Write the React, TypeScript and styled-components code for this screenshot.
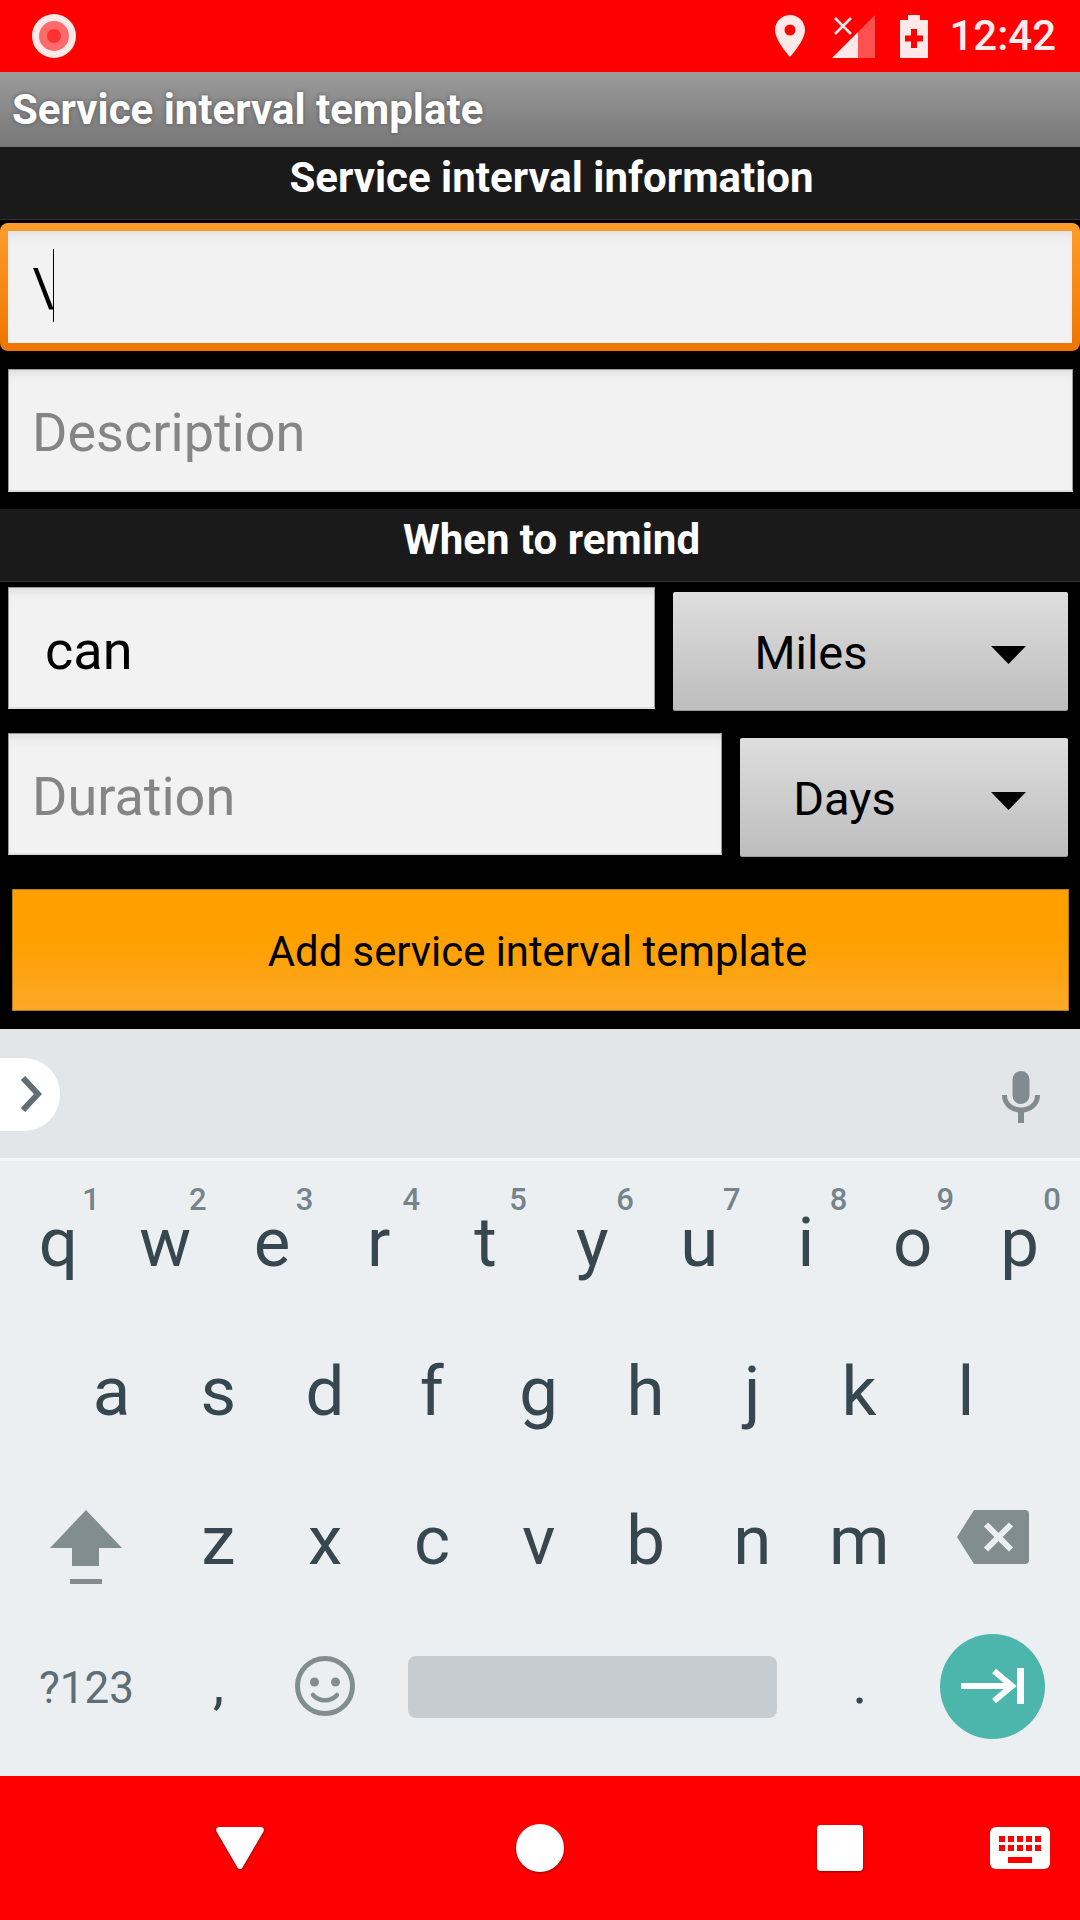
import React from "react";
import styled, { createGlobalStyle } from "styled-components";

const Global = createGlobalStyle`
  html, body { margin: 0; padding: 0; background: #000; }
  #root { width: 1080px; height: 1920px; overflow: hidden; }
  * { box-sizing: border-box; }
`;

const Screen = styled.div`
  width: 1080px;
  height: 1920px;
  display: flex;
  flex-direction: column;
  background: #000;
  font-family: Roboto, "Liberation Sans", sans-serif;
`;

const StatusBar = styled.div`
  height: 72px;
  background: #f00;
  display: flex;
  align-items: center;
  padding: 0 24px 0 32px;
`;
const StatusGap = styled.div`flex: 1;`;
const Clock = styled.span`
  color: #ffecec;
  font-size: 42px;
  font-weight: 500;
  margin-left: 21px;
  line-height: 72px;
`;
const StatusIcon = styled.svg<{ $ml?: number }>`
  display: block;
  flex: none;
  margin-left: ${p => p.$ml ?? 0}px;
`;

const Form = styled.div`
  height: 957px;
  display: flex;
  flex-direction: column;
`;
const TitleBar = styled.div`
  height: 75px;
  background: linear-gradient(#9b9b9b, #777);
  color: #fff;
  font-size: 42px;
  font-weight: 700;
  line-height: 75px;
  padding-left: 12px;
  text-shadow: 0 0 4px #555;
`;
const SectionHeader = styled.div<{ $mt?: number }>`
  height: 73px;
  flex: none;
  margin-top: ${p => p.$mt ?? 0}px;
  background: #1a1a1a;
  border-bottom: 1px solid #333;
  color: #fff;
  font-size: 42px;
  font-weight: 700;
  text-align: center;
  line-height: 62px;
  padding-left: 23px;
`;
const FocusField = styled.div`
  margin-top: 3px;
  height: 128px;
  flex: none;
  padding: 8px;
  border-radius: 8px;
  background: linear-gradient(#ff9d2b, #ee7500);
`;
const FieldFill = styled.div`
  height: 100%;
  background: #f2f2f2;
  box-shadow: inset 0 10px 12px -8px #d8d8d8;
  padding-left: 24px;
  display: flex;
  align-items: center;
  font-size: 54px;
  color: #000;
`;
const Caret = styled.span`
  width: 1px;
  height: 73px;
  background: #000;
  margin: -3px 0 0 -1px;
`;
const Field = styled.div<{ $w?: number; $h?: number; $pl?: number; $mt?: number; $dim?: boolean }>`
  ${p => (p.$w ? `width: ${p.$w}px; flex: none;` : "margin: 0 7px 0 8px;")}
  margin-top: ${p => p.$mt ?? 0}px;
  height: ${p => p.$h ?? 122}px;
  flex: none;
  background: #f2f2f2;
  border: 1px solid #999;
  border-bottom: 2px solid #ddd;
  box-shadow: inset 0 10px 12px -8px #d8d8d8;
  padding: 5px 0 0 ${p => p.$pl ?? 23}px;
  display: flex;
  align-items: center;
  font-size: 54px;
  color: ${p => (p.$dim ? "#858585" : "#000")};
`;
const Row = styled.div<{ $mt: number }>`
  display: flex;
  align-items: flex-start;
  margin: ${p => p.$mt}px 12px 0 8px;
  gap: 18px;
  flex: none;
`;
const Select = styled.div<{ $w: number }>`
  width: ${p => p.$w}px;
  flex: none;
  height: 119px;
  margin-top: 5px;
  background: linear-gradient(#dedede, #bdbdbd);
  border-radius: 2px;
  border-bottom: 1px solid #999;
  display: flex;
  align-items: center;
  font-size: 47px;
  color: #000;
`;
const SelectLabel = styled.span`
  flex: 1;
  text-align: center;
  padding-top: 2px;
`;
const SelectArrow = styled.svg`
  display: block;
  margin: 8px 42px 0 42px;
`;
const AddButton = styled.div`
  margin: 32px 11px 0 12px;
  height: 122px;
  flex: none;
  background: linear-gradient(#ffa000 40%, #fca727);
  border: 1px solid #b57a1a;
  color: #000;
  font-size: 41.800px;
  display: flex;
  align-items: center;
  justify-content: center;
  padding: 2px 6px 0 0;
`;

const Keyboard = styled.div`
  height: 747px;
  background: #ebeff2;
  display: flex;
  flex-direction: column;
  color: #37474f;
`;
const SuggestStrip = styled.div`
  height: 132px;
  flex: none;
  background: #e2e6e9;
  border-bottom: 3px solid #f4f6f8;
  display: flex;
  align-items: center;
  justify-content: space-between;
  padding-right: 40px;
`;
const Pill = styled.div`
  width: 60px;
  height: 73px;
  background: #fff;
  border-radius: 0 36px 36px 0;
  display: flex;
  align-items: center;
  padding-left: 20px;
  margin-top: 1px;
`;
const MicIcon = styled.svg`
  display: block;
  margin-top: 6px;
`;
const KeyRows = styled.div`
  flex: 1;
  display: flex;
  flex-direction: column;
  padding-top: 13px;
`;
const KeyRow = styled.div<{ $pl: number; $pb?: number }>`
  height: 149px;
  flex: none;
  display: flex;
  justify-content: flex-start;
  align-items: center;
  padding-left: ${p => p.$pl}px;
  padding-bottom: ${p => p.$pb ?? 0}px;
`;
const Key = styled.div<{ $w?: number }>`
  position: relative;
  width: ${p => p.$w ?? 106.8}px;
  flex: none;
  height: 100%;
  display: flex;
  align-items: center;
  justify-content: center;
  font-size: 69px;
  line-height: 1;
  color: #37474f;
`;
const Letter = styled.span`
  margin-bottom: 12px;
`;
const Hint = styled.span`
  position: absolute;
  top: 10px;
  right: 12px;
  font-size: 31px;
  font-weight: 500;
  color: #75838a;
`;
const SymbolsLabel = styled.span`
  font-size: 44px;
  color: #5d6e76;
  padding-top: 4px;
`;
const Punctuation = styled.span`
  font-size: 56px;
  margin-bottom: 4px;
`;
const SpaceBar = styled.div`
  width: 369px;
  height: 62px;
  flex: none;
  background: #c7ccd0;
  border-radius: 8px;
  margin: 2px 30px 0 29px;
`;
const EnterCircle = styled.div`
  width: 105px;
  height: 105px;
  border-radius: 50%;
  background: #4db6ac;
  display: flex;
  align-items: center;
  justify-content: center;
`;
const ShiftIcon = styled.svg`
  display: block;
  margin-right: 2px;
`;
const DeleteIcon = styled.svg`
  display: block;
  margin-bottom: 20px;
`;

const NavBar = styled.div`
  height: 144px;
  flex: none;
  background: #f00;
  display: flex;
  align-items: center;
  padding-left: 216px;
`;
const NavIcon = styled.svg<{ $ml?: number; $shadow?: boolean }>`
  display: block;
  flex: none;
  overflow: visible;
  margin-left: ${p => p.$ml ?? 0}px;
  ${p => (p.$shadow ? "filter: drop-shadow(0 1px 1px rgba(0,0,0,.45));" : "")}
`;

const row1: [string, string][] = [["q","1"],["w","2"],["e","3"],["r","4"],["t","5"],["y","6"],["u","7"],["i","8"],["o","9"],["p","0"]];

export default function App() {
  return (
    <Screen>
      <Global />
      <StatusBar>
        <StatusIcon width="44" height="44" viewBox="0 0 44 44">
          <circle cx="22" cy="22" r="22" fill="#ffe8e8" />
          <circle cx="22" cy="22" r="15" fill="#ff6a6a" />
          <circle cx="22" cy="22" r="7" fill="#ff3030" />
        </StatusIcon>
        <StatusGap />
        <StatusIcon width="30" height="42" viewBox="0 0 30 42">
          <path fillRule="evenodd" fill="#ffe8e8" d="M15 0C6.700 0 0 6.700 0 15c0 10.500 15 27 15 27s15-16.500 15-27C30 6.700 23.300 0 15 0zm0 9.500a5.500 5.500 0 1 1 0 11 5.500 5.500 0 0 1 0-11z" />
        </StatusIcon>
        <StatusIcon $ml={27} width="43" height="43" viewBox="0 0 43 43">
          <path fill="#ff5050" d="M43 0v43H26V17z" />
          <path fill="#ffe8e8" d="M26 17v26H0z" />
          <path stroke="#ffe8e8" strokeWidth="2.500" fill="none" d="M3 3l16 16M19 3L3 19" />
        </StatusIcon>
        <StatusIcon $ml={25} width="28" height="43" viewBox="0 0 28 43">
          <path fill="#ffe8e8" d="M8 0h12v5h8v38H0V5h8z" />
          <path fill="#f00" d="M11 14h6v6.500h6v6h-6V33h-6v-6.500H5v-6h6z" />
        </StatusIcon>
        <Clock>12:42</Clock>
      </StatusBar>
      <Form>
        <TitleBar>Service interval template</TitleBar>
        <SectionHeader>Service interval information</SectionHeader>
        <FocusField>
          <FieldFill>\<Caret /></FieldFill>
        </FocusField>
        <Field $mt={18} $h={123} $dim>Description</Field>
        <SectionHeader $mt={17}>When to remind</SectionHeader>
        <Row $mt={5}>
          <Field $w={647} $pl={36}>can</Field>
          <Select $w={395}>
            <SelectLabel>Miles</SelectLabel>
            <SelectArrow width="35" height="18" viewBox="0 0 35 18"><path d="M0 0h35L17.500 18z" fill="#000" /></SelectArrow>
          </Select>
        </Row>
        <Row $mt={22}>
          <Field $w={714} $dim>Duration</Field>
          <Select $w={328}>
            <SelectLabel>Days</SelectLabel>
            <SelectArrow width="35" height="18" viewBox="0 0 35 18"><path d="M0 0h35L17.500 18z" fill="#000" /></SelectArrow>
          </Select>
        </Row>
        <AddButton>Add service interval template</AddButton>
      </Form>
      <Keyboard>
        <SuggestStrip>
          <Pill>
            <svg width="22" height="36" viewBox="0 0 22 36"><path d="M3 2l15 16L3 34" fill="none" stroke="#5f6f75" strokeWidth="6" /></svg>
          </Pill>
          <MicIcon width="38" height="52" viewBox="0 0 38 52">
            <rect x="10.500" y="0" width="17" height="33" rx="8.500" fill="#808c8f" />
            <path d="M2.500 24c0 9 7 15 16.500 15s16.500-6 16.500-15" fill="none" stroke="#808c8f" strokeWidth="5" />
            <rect x="16" y="39" width="6" height="13" fill="#808c8f" />
          </MicIcon>
        </SuggestStrip>
        <KeyRows>
          <KeyRow $pl={5}>
            {row1.map(([k, n]) => (
              <Key key={k}><Letter>{k}</Letter><Hint>{n}</Hint></Key>
            ))}
          </KeyRow>
          <KeyRow $pl={58}>
            {"asdfghjkl".split("").map(k => <Key key={k}><Letter>{k}</Letter></Key>)}
          </KeyRow>
          <KeyRow $pl={8}>
            <Key $w={157}>
              <ShiftIcon width="72" height="74" viewBox="0 0 72 74">
                <path d="M36 0l36 38H49v18H22V38H0z" fill="#828d90" />
                <rect x="20" y="69" width="32" height="5" fill="#828d90" />
              </ShiftIcon>
            </Key>
            {"zxcvbnm".split("").map(k => <Key key={k}><Letter>{k}</Letter></Key>)}
            <Key $w={161}>
              <DeleteIcon width="72" height="54" viewBox="0 0 72 54">
                <path d="M17 0h51a4 4 0 0 1 4 4v46a4 4 0 0 1-4 4H17L0 27z" fill="#828d90" />
                <path d="M29 14.500l25 25M54 14.500l-25 25" stroke="#ebeff2" strokeWidth="6" />
              </DeleteIcon>
            </Key>
          </KeyRow>
          <KeyRow $pl={8} $pb={19}>
            <Key $w={157}><SymbolsLabel>?123</SymbolsLabel></Key>
            <Key><Punctuation>,</Punctuation></Key>
            <Key>
              <svg width="60" height="60" viewBox="0 0 60 60">
                <circle cx="30" cy="30" r="27.500" fill="none" stroke="#828d90" strokeWidth="5" />
                <circle cx="19.500" cy="26" r="4.500" fill="#828d90" />
                <circle cx="40.500" cy="26" r="4.500" fill="#828d90" />
                <path d="M18 39c6 7 18 7 24 0" fill="none" stroke="#828d90" strokeWidth="4.500" strokeLinecap="round" />
              </svg>
            </Key>
            <SpaceBar />
            <Key><Punctuation>.</Punctuation></Key>
            <Key $w={159}>
              <EnterCircle>
                <svg width="63" height="36" viewBox="0 0 63 36">
                  <path d="M0 18h50M33 3l18 15-18 15" fill="none" stroke="#fff" strokeWidth="6" />
                  <rect x="56" y="0" width="7" height="36" fill="#fff" />
                </svg>
              </EnterCircle>
            </Key>
          </KeyRow>
        </KeyRows>
      </Keyboard>
      <NavBar>
        <NavIcon $shadow width="48" height="42" viewBox="0 0 48 42">
          <path d="M3 0h42c2.500 0 3.500 2.500 2.500 4.500L26.500 40.500c-1 2-4 2-5 0L.5 4.500C-.5 2.500.5 0 3 0z" fill="#fff" />
        </NavIcon>
        <NavIcon $shadow $ml={252} width="48" height="48" viewBox="0 0 48 48"><circle cx="24" cy="24" r="24" fill="#fff" /></NavIcon>
        <NavIcon $shadow $ml={253} width="46" height="46" viewBox="0 0 46 46"><rect width="46" height="46" rx="4" fill="#fff" /></NavIcon>
        <NavIcon $ml={127} width="60" height="42" viewBox="0 0 60 42">
          <rect width="60" height="42" rx="6" fill="#fff" />
          <path fill="#f00" d="M9 9h6v6H9zM18 9h6v6h-6zM27 9h6v6h-6zM36 9h6v6h-6zM45 9h6v6h-6zM9 18h6v6H9zM18 18h6v6h-6zM27 18h6v6h-6zM36 18h6v6h-6zM45 18h6v6h-6zM18 30h24v6H18z" />
        </NavIcon>
      </NavBar>
    </Screen>
  );
}
